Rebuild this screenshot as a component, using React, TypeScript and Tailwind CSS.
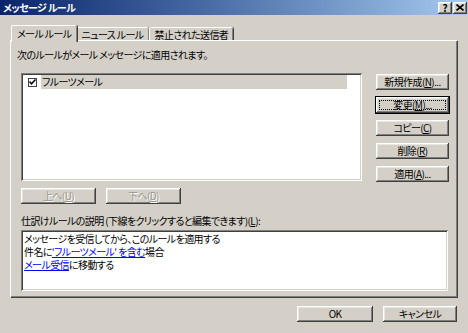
import type { ReactNode } from "react";

// Win2000-style "メッセージ ルール" dialog. Everything is laid out at the
// screenshot's (already downscaled) size, so fonts run ~10px.

const RAISED =
  "bg-[#d4d0c8] shadow-[inset_-1px_-1px_0_#404040,inset_1px_1px_0_#ffffff,inset_-2px_-2px_0_#808080,inset_2px_2px_0_#e8e6e1]";
const SUNKEN =
  "bg-white shadow-[inset_1px_1px_0_#808080,inset_-1px_-1px_0_#ffffff,inset_2px_2px_0_#404040,inset_-2px_-2px_0_#d4d0c8]";

function Button({
  children,
  w,
  focused = false,
  disabled = false,
}: {
  children: ReactNode;
  w: string;
  focused?: boolean;
  disabled?: boolean;
}) {
  return (
    <div
      className={`${w} relative flex h-[16px] items-center justify-center text-[10px] leading-none ${RAISED} ${
        focused ? "outline outline-1 outline-black" : ""
      } ${disabled ? "text-[#9a978f] [text-shadow:1px_1px_0_#ffffff]" : "text-black"}`}
    >
      {focused && (
        <span className="pointer-events-none absolute inset-[3px] border border-dotted border-black" />
      )}
      <span className="relative">{children}</span>
    </div>
  );
}

function Tab({ label, active = false }: { label: string; active?: boolean }) {
  return (
    <div
      className={
        active
          ? "relative z-10 -mb-[2px] -mr-[1px] flex h-[17px] items-center rounded-t-[2px] border-l border-t border-white bg-[#d4d0c8] px-[5px] pb-[2px] text-[10px] shadow-[inset_-1px_0_0_#808080,1px_0_0_#404040]"
          : "flex h-[13px] items-center rounded-t-[2px] border-l border-t border-white bg-[#d4d0c8] px-[5px] text-[10px] shadow-[inset_-1px_0_0_#808080,1px_0_0_#404040]"
      }
    >
      {label}
    </div>
  );
}

function CaptionButton({ children }: { children: ReactNode }) {
  return (
    <div
      className={`flex h-[12px] w-[14px] items-center justify-center text-[10px] font-bold leading-none tracking-normal text-black ${RAISED}`}
    >
      {children}
    </div>
  );
}

export default function App() {
  return (
    <div
      className="h-[333px] w-[468px] overflow-hidden bg-[#d4d0c8] tracking-[-0.6px] text-black [font-feature-settings:'palt']"
      style={{ fontFamily: '"Noto Sans CJK JP", "Noto Sans", sans-serif' }}
    >
      {/* title bar */}
      <div className="flex h-[15px] items-center justify-between bg-gradient-to-r from-[#0a246a] to-[#a6caf0] pl-[3px] pr-[1px]">
        <span className="text-[10px] font-bold leading-none text-white">メッセージ ルール</span>
        <div className="flex gap-[1px]">
          <CaptionButton>?</CaptionButton>
          <CaptionButton>
            <svg width="8" height="7" viewBox="0 0 8 7">
              <path d="M0.5 0.5 L7.5 6.5 M7.5 0.5 L0.5 6.5" stroke="black" strokeWidth="1.6" />
            </svg>
          </CaptionButton>
        </div>
      </div>

      {/* tabs */}
      <div className="mt-[10px] flex h-[15px] items-end pl-[11px]">
        <Tab label="メール ルール" active />
        <Tab label="ニュース ルール" />
        <Tab label="禁止された送信者" />
      </div>

      {/* tab page */}
      <div className="ml-[10px] flex h-[257px] w-[447px] flex-col border-l border-t border-white pl-[6px] shadow-[inset_-1px_-1px_0_#808080,1px_1px_0_#404040]">
        <p className="mt-[8px] h-[12px] text-[10px] leading-[12px]">
          次のルールがメール メッセージに適用されます。
        </p>

        <div className="ml-[4px] mt-[12px] flex gap-[14px]">
          <div className={`h-[108px] w-[341px] p-[2px] ${SUNKEN}`}>
            <div className="flex h-[14px] items-center">
              <span className="ml-[5px] flex h-[9px] w-[9px] items-center justify-center border border-[#404040] bg-white">
                <svg width="7" height="6" viewBox="0 0 7 6">
                  <path d="M0.5 2.5 L2.5 4.8 L6.5 0.5" stroke="black" strokeWidth="1.5" fill="none" />
                </svg>
              </span>
              <span className="ml-[4px] flex h-[14px] w-[306px] items-center bg-[#d4d0c8] pl-[1px] text-[10px] leading-none">
                フルーツメール
              </span>
            </div>
          </div>

          <div className="mt-[1px] flex flex-col gap-[7px]">
            <Button w="w-[73px]">
              新規作成(<u>N</u>)...
            </Button>
            <Button w="w-[73px]" focused>
              変更(<u>M</u>)...
            </Button>
            <Button w="w-[73px]">
              コピー(<u>C</u>)
            </Button>
            <Button w="w-[73px]">
              削除(<u>R</u>)
            </Button>
            <Button w="w-[73px]">
              適用(<u>A</u>)...
            </Button>
          </div>
        </div>

        <div className="ml-[4px] mt-[6px] flex gap-[10px]">
          <Button w="w-[75px]" disabled>
            上へ(<u>U</u>)
          </Button>
          <Button w="w-[75px]" disabled>
            下へ(<u>D</u>)
          </Button>
        </div>

        <p className="ml-[4px] mt-[11px] h-[12px] text-[10px] leading-[12px]">
          仕訳けルールの説明 (下線をクリックすると編集できます)(<u>L</u>):
        </p>

        <div className={`ml-[4px] mt-[3px] flex h-[61px] w-[427px] flex-col px-[3px] pt-[2px] text-[10px] ${SUNKEN}`}>
          <div className="flex h-[13px] items-center leading-none">メッセージを受信してから、このルールを適用する</div>
          <div className="flex h-[13px] items-center leading-none">
            <span>件名に</span>
            <span className="text-[#0000ff] underline">'フルーツメール' を含む</span>
            <span>場合</span>
          </div>
          <div className="flex h-[13px] items-center leading-none">
            <span className="text-[#0000ff] underline">メール受信</span>
            <span>に移動する</span>
          </div>
        </div>
      </div>

      {/* dialog buttons */}
      <div className="mt-[9px] flex justify-end gap-[10px] pr-[11px]">
        <div className="h-[17px]">
          <Button w="w-[76px]">OK</Button>
        </div>
        <Button w="w-[74px]">キャンセル</Button>
      </div>
    </div>
  );
}
